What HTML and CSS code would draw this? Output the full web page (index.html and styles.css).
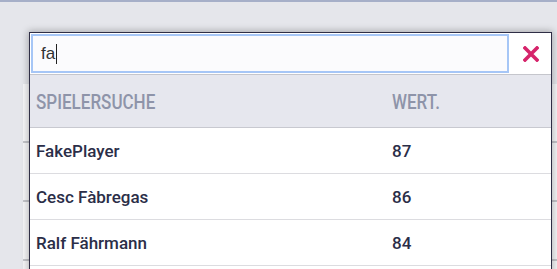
FILE: index.html
```html
<!DOCTYPE html>
<html lang="de">
<head>
    <meta charset="UTF-8">
    <title>Spielersuche</title>
    <link rel="stylesheet" href="styles.css">
</head>
<body>
    <div class="topbar"></div>

    <!-- Underlying table card -->
    <div class="card">
        <div class="card-row"></div>
        <div class="card-row"></div>
        <div class="card-row"></div>
    </div>

    <!-- Search dropdown -->
    <div class="dropdown">
        <div class="search-row">
            <div class="search-input">
                <span>fa</span><span class="caret"></span>
            </div>
            <div class="close-btn">
                <svg width="16" height="16" viewBox="0 0 16 16">
                    <path d="M2 2 L14 14 M14 2 L2 14" stroke="#d6246b" stroke-width="3.6" stroke-linecap="square"/>
                </svg>
            </div>
        </div>

        <div class="result-head">
            <span><span class="head-label">Spielersuche</span></span>
            <span><span class="head-label">Wert.</span></span>
        </div>

        <div class="result-row">
            <span>FakePlayer</span>
            <span>87</span>
        </div>
        <div class="result-row">
            <span>Cesc Fàbregas</span>
            <span>86</span>
        </div>
        <div class="result-row">
            <span>Ralf Fährmann</span>
            <span>84</span>
        </div>
    </div>
</body>
</html>
```

FILE: styles.css
```css
* {
    margin: 0;
    padding: 0;
    box-sizing: border-box;
}

:root {
    --bg-page: #e5e6eb;
    --bg-head: #e6e7ee;
    --text-dark: #2b2e48;
    --text-muted: #8e94a9;
    --accent-pink: #d6246b;
    --focus-blue: #a6c6f6;
}

body {
    background-color: var(--bg-page);
    height: 269px;
    overflow: hidden;
    position: relative;
    font-family: Roboto, 'Liberation Sans', sans-serif;
}

.topbar {
    height: 2px;
    background-color: #a6afc8;
}

/* Underlying card */
.card {
    margin: 82px 0 0 23px;
    background-color: #f6f6f8;
    height: 200px;
}

.card-row {
    height: 59px;
    border-bottom: 2px solid #c4c5ca;
}

/* Dropdown */
.dropdown {
    position: absolute;
    left: 29px;
    top: 32px;
    width: 523px;
    height: 260px;
    background-color: #ffffff;
    border: 1px solid #2f2e45;
    border-bottom: none;
    box-shadow: 0 0 7px 1px rgba(0, 0, 0, 0.28);
}

.search-row {
    display: flex;
    padding: 1px 0 1px 1px;
}

.search-input {
    width: 478px;
    height: 39px;
    border: 2px solid var(--focus-blue);
    background-color: #fbfbfd;
    padding-left: 8px;
    display: flex;
    align-items: center;
    font-family: 'Liberation Sans', Arial, sans-serif;
    font-size: 17px;
    color: #333333;
}

.caret {
    width: 1px;
    height: 20px;
    background-color: #222222;
    margin-left: 1px;
}

.close-btn {
    flex: 1;
    display: flex;
    align-items: center;
    justify-content: center;
    padding-left: 2px;
}

.result-head,
.result-row {
    display: grid;
    grid-template-columns: 356px 1fr;
    align-items: center;
    padding-left: 6px;
}

.result-head {
    height: 54px;
    padding-top: 1px;
    background-color: var(--bg-head);
    border-top: 1px solid #c5c6cc;
    border-bottom: 1px solid #c8c9d0;
    font-size: 21px;
    font-weight: 500;
    text-transform: uppercase;
    color: var(--text-muted);
}

.head-label {
    display: inline-block;
    transform: scaleX(0.81);
    transform-origin: left center;
}

.result-row {
    height: 46px;
    padding-top: 1px;
    border-bottom: 1px solid #dcdce0;
    font-size: 17px;
    font-weight: 500;
    color: var(--text-dark);
}
```
